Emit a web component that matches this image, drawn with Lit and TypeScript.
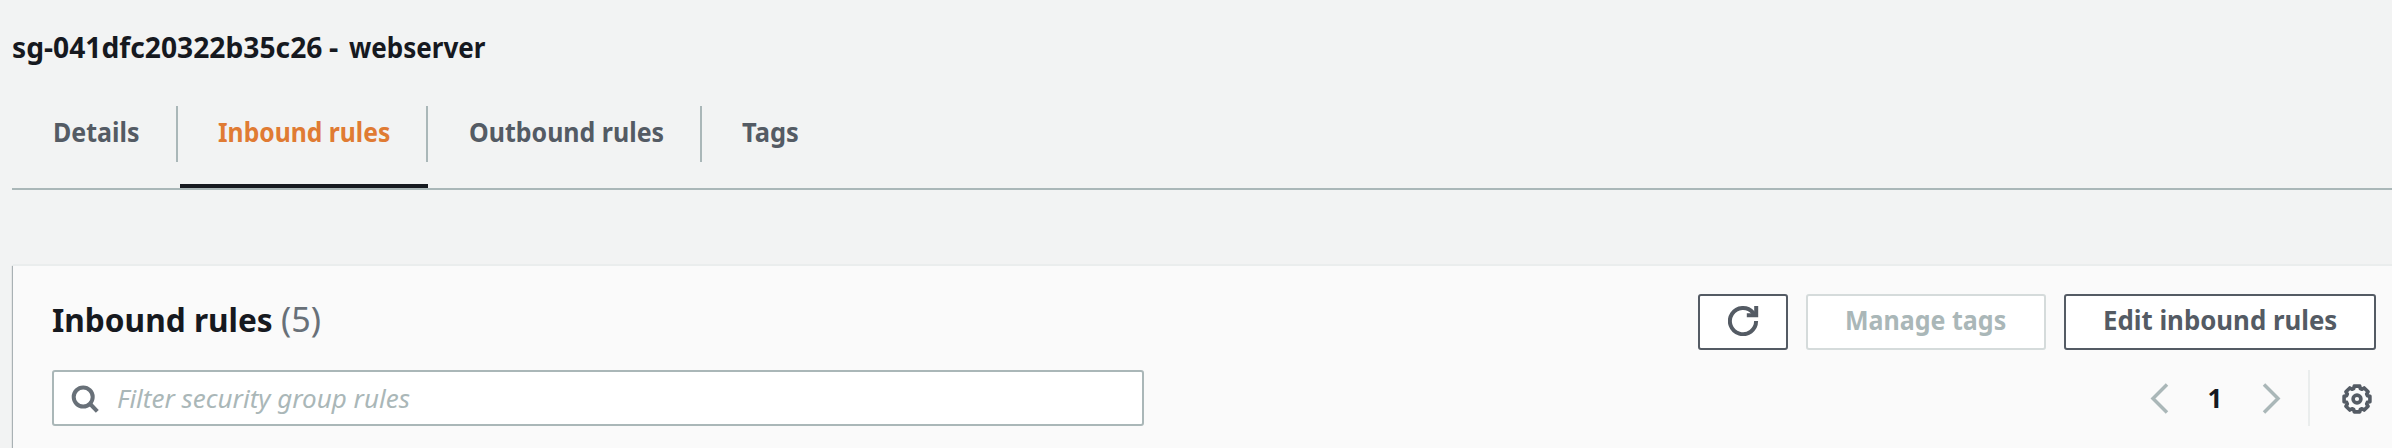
import { LitElement, html, css, svg } from "lit";
import { classMap } from "lit/directives/class-map.js";

const gearPath = (): string => {
  const pts: string[] = [];
  for (let i = 0; i < 8; i++) {
    const a = (i * Math.PI) / 4;
    for (const [r, d] of [[10.9, -0.31], [13.2, -0.21], [13.2, 0.21], [10.9, 0.31]]) {
      pts.push(`${(16 + r * Math.cos(a + d)).toFixed(2)} ${(16 + r * Math.sin(a + d)).toFixed(2)}`);
    }
  }
  return `M${pts.join("L")}Z`;
};

const icons = {
  search: svg`<circle cx="13.2" cy="13" r="9.5"/><path d="M19.7 19.5L27.3 27.3"/>`,
  refresh: svg`<path d="M28.1 17A13.1 13.1 0 1 1 25 8.6L27.6 11.3"/><path d="M28.2 2V11.3H18.8"/>`,
  left: svg`<path d="M24 1.5L10 15.5L24 29.5"/>`,
  right: svg`<path d="M8 1.5L22 15.5L8 29.5"/>`,
  gear: svg`<path d=${gearPath()}/><circle cx="16" cy="16" r="3.9"/>`,
};

const icon = (name: keyof typeof icons) =>
  html`<svg class="icon ${name}" viewBox="0 0 32 32" width="32" height="32">${icons[name]}</svg>`;

class AppRoot extends LitElement {
  static properties = { active: { state: true } };
  static styles = css`
    :host {
      display: block;
      box-sizing: border-box;
      height: 448px;
      overflow: hidden;
      padding: 27px 0 0 12px;
      background: #f2f3f3;
      color: #16191f;
      font: 700 27px "Noto Sans", sans-serif;
    }
    * { box-sizing: border-box; }
    h1, h2 { margin: 0; }
    .t {
      display: block;
      width: max-content;
      white-space: pre;
      transform-origin: 0 0;
    }
    h1 { display: flex; font-size: 29px; line-height: 40px; height: 79px; }
    h1 .id { width: 317px; }
    h1 .id .t { transform: scaleX(0.973); }
    h1 .dash { width: 20px; }
    h1 .name .t { transform: scaleX(0.897); }
    .tabs {
      display: flex;
      height: 84px;
      border-bottom: 2px solid #aab7b8;
      color: #545b64;
    }
    .tab { position: relative; height: 82px; }
    .tab .label { height: 56px; padding-left: 40px; line-height: 51px; border-right: 2px solid #aab7b8; }
    .tab:last-child .label { border: 0; }
    .details { width: 166px; }
    .inbound { width: 250px; }
    .outbound { width: 274px; }
    .tags { width: 140px; }
    .details .label, .outbound .label { padding-left: 41px; }
    .details .t { transform: scaleX(0.925); }
    .inbound .t { transform: scaleX(0.914); }
    .outbound .t { transform: scaleX(0.924); }
    .tags .t { transform: scaleX(0.942); }
    .active { color: #e07b33; }
    .active::after {
      content: "";
      position: absolute;
      left: 2px;
      right: 0;
      bottom: 0;
      height: 4px;
      background: #16191f;
    }
    .panel {
      margin: 74px 0 0 1px;
      height: 190px;
      padding: 28px 16px 0 39px;
      border-top: 2px solid #eaeded;
      background: #fafafa;
      box-shadow: -1px 2px 1px rgba(0, 28, 36, 0.3);
    }
    .row { display: flex; justify-content: space-between; height: 56px; }
    .row + .row { margin-top: 20px; }
    h2 { display: flex; font-size: 33px; line-height: 51px; }
    h2 .name { width: 229px; }
    h2 .name .t { transform: scaleX(0.958); }
    h2 .count { font-weight: 400; font-size: 34px; color: #687078; }
    .actions { display: flex; gap: 18px; }
    button {
      display: block;
      height: 56px;
      margin: 0;
      border: 2px solid #545b64;
      border-radius: 3px;
      background: #fff;
      color: #545b64;
      font: inherit;
      line-height: 47px;
      text-align: left;
      padding: 0 0 5px 37px;
    }
    button.reload { width: 90px; padding: 0 0 4px 28px; }
    button.manage { width: 240px; border-color: #d5dbdb; color: #aab7b8; }
    button.edit { width: 312px; }
    .manage .t { transform: scaleX(0.926); }
    .edit .t { transform: scaleX(0.956); }
    .filter {
      display: flex;
      width: 1092px;
      border: 2px solid #aab7b8;
      border-radius: 3px;
      background: #fff;
      padding: 12px 0 0 16px;
    }
    .placeholder {
      margin: -12px 0 0 15px;
      font: italic 400 26px/52px "Noto Sans", sans-serif;
      color: #aab7b8;
    }
    .pager { display: flex; }
    .num { width: 28px; margin: 0 27px 0 26px; text-align: center; font-size: 26px; line-height: 56px; }
    .prefs { margin-left: 20px; padding: 13px 3px 0 31px; border-left: 2px solid #eaeded; }
    .icon { display: block; flex: none; fill: none; stroke: #545b64; stroke-width: 4; }
    .search { stroke: #687078; }
    .left, .right { stroke: #aab7b8; stroke-width: 3.5; margin-top: 13px; }
    .gear { stroke-width: 3.6; stroke-linejoin: round; }
  `;

  declare active: string;
  private tabs = [
    ["details", "Details"],
    ["inbound", "Inbound rules"],
    ["outbound", "Outbound rules"],
    ["tags", "Tags"],
  ];

  constructor() {
    super();
    this.active = "inbound";
  }

  render() {
    return html`
      <h1>
        <span class="id"><span class="t">sg-041dfc20322b35c26</span></span>
        <span class="dash">-</span>
        <span class="name"><span class="t">webserver</span></span>
      </h1>
      <nav class="tabs">
        ${this.tabs.map(
          ([id, label]) => html`<div
            class=${classMap({ tab: true, [id]: true, active: id === this.active })}
            @click=${() => (this.active = id)}
          ><div class="label"><span class="t">${label}</span></div></div>`
        )}
      </nav>
      <section class="panel">
        <div class="row">
          <h2><span class="name"><span class="t">Inbound rules</span></span><span class="count">(5)</span></h2>
          <div class="actions">
            <button class="reload" aria-label="Refresh">${icon("refresh")}</button>
            <button class="manage"><span class="t">Manage tags</span></button>
            <button class="edit"><span class="t">Edit inbound rules</span></button>
          </div>
        </div>
        <div class="row">
          <div class="filter">${icon("search")}<span class="placeholder">Filter security group rules</span></div>
          <div class="pager">
            ${icon("left")}<span class="num">1</span>${icon("right")}
            <div class="prefs">${icon("gear")}</div>
          </div>
        </div>
      </section>
    `;
  }
}
customElements.define("app-root", AppRoot);
